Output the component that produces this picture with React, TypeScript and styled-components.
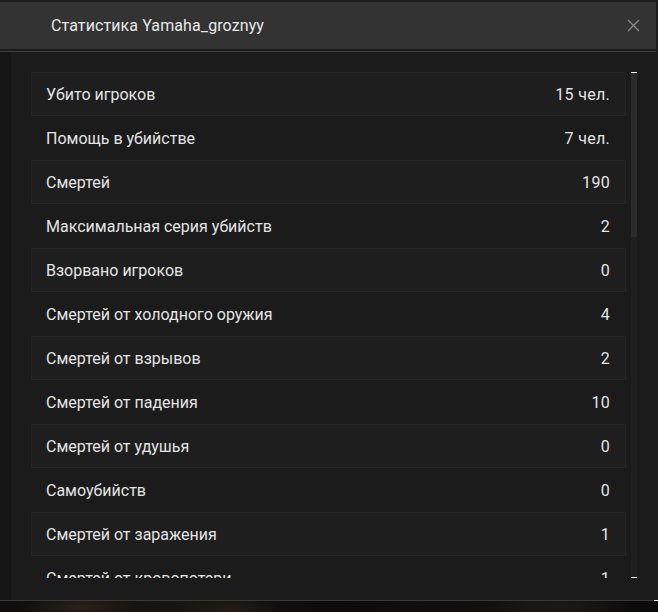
import React from "react";
import styled, { createGlobalStyle } from "styled-components";

const Global = createGlobalStyle`
  html, body { margin: 0; padding: 0; background: #0b0908; }
  body { font-family: Roboto, "Noto Sans", sans-serif; }
  * { box-sizing: border-box; }
`;

const Page = styled.div`
  width: 658px;
  height: 612px;
  display: flex;
  flex-direction: column;
  overflow: hidden;
`;

const Modal = styled.div`
  width: 658px;
  height: 600px;
  flex: none;
  display: flex;
  flex-direction: column;
  background: #1b1b1b;
  border-top: 2px solid #1d1d1d;
  border-right: 2px solid #1d1d1d;
`;

const Header = styled.div`
  height: 49px;
  flex: none;
  display: flex;
  align-items: center;
  justify-content: space-between;
  padding: 0 16px 0 51px;
  background: #333333;
  border-bottom: 2px solid #1c1c1c;
  box-shadow: 0 1px 0 #3d3d3d;
  margin-bottom: 1px;
`;

const Title = styled.div`
  color: #e8e8e8;
  font-size: 16px;
  letter-spacing: 0.1px;
`;

const Close = styled.button`
  width: 14px;
  height: 14px;
  padding: 0;
  border: 0;
  background: none;
  display: flex;
  align-items: center;
  justify-content: center;
  cursor: pointer;
`;

const Body = styled.div`
  flex: 1;
  display: flex;
  min-height: 0;
`;

const SideStrip = styled.div`
  width: 11px;
  flex: none;
  background: #161616;
`;

const Content = styled.div`
  flex: 1;
  display: flex;
  gap: 5px;
  padding: 20px 0 0 20px;
`;

const List = styled.div`
  width: 595px;
  height: 506px;
  overflow: hidden;
  display: flex;
  flex-direction: column;
`;

const Row = styled.div<{ $boxed: boolean }>`
  height: 44px;
  flex: none;
  display: flex;
  align-items: center;
  justify-content: space-between;
  padding: 0 15px 0 14px;
  color: #e4e4e4;
  font-size: 16px;
  background: ${(p) => (p.$boxed ? "#1e1e1e" : "transparent")};
  border: 1px solid ${(p) => (p.$boxed ? "#252525" : "transparent")};
`;

const Value = styled.span`
  letter-spacing: 0.3px;
`;

const Scrollbar = styled.div`
  width: 6px;
  height: 506px;
  display: flex;
  flex-direction: column;
  background: #1f1f1f;
  border-top: 1px solid #f0f0f0;
  border-bottom: 1px solid #f0f0f0;
`;

const Thumb = styled.div`
  height: 164px;
  background: #2b2b2b;
`;

const BottomLine = styled.div`
  height: 1px;
  flex: none;
  display: flex;
  justify-content: flex-end;
  background: #3a3a3a;
`;

const EndMark = styled.div`
  width: 4px;
  height: 1px;
  background: #f0f0f0;
`;

const Backdrop = styled.div`
  flex: 1;
  background:
    radial-gradient(ellipse 60px 12px at 80px 6px, #2a2219 0%, transparent 100%),
    radial-gradient(ellipse 50px 10px at 230px 8px, #241d16 0%, transparent 100%),
    radial-gradient(ellipse 70px 12px at 560px 6px, #1f1a15 0%, transparent 100%),
    linear-gradient(90deg, #100d0a 0%, #1a1510 30%, #0e0b09 50%, #15110d 80%, #0c0a08 100%);
`;

const stats: [string, string][] = [
  ["Убито игроков", "15 чел."],
  ["Помощь в убийстве", "7 чел."],
  ["Смертей", "190"],
  ["Максимальная серия убийств", "2"],
  ["Взорвано игроков", "0"],
  ["Смертей от холодного оружия", "4"],
  ["Смертей от взрывов", "2"],
  ["Смертей от падения", "10"],
  ["Смертей от удушья", "0"],
  ["Самоубийств", "0"],
  ["Смертей от заражения", "1"],
  ["Смертей от кровопотери", "1"],
];

export default function App() {
  return (
    <Page>
      <Global />
      <Modal>
        <Header>
          <Title>Статистика Yamaha_groznyy</Title>
          <Close aria-label="Закрыть">
            <svg width="13" height="13" viewBox="0 0 13 13">
              <path d="M1 1 L12 12 M12 1 L1 12" stroke="#8a8a8a" strokeWidth="1.3" fill="none" />
            </svg>
          </Close>
        </Header>
        <Body>
          <SideStrip />
          <Content>
            <List>
              {stats.map(([label, value], i) => (
                <Row key={label} $boxed={i % 2 === 0}>
                  <span>{label}</span>
                  <Value>{value}</Value>
                </Row>
              ))}
            </List>
            <Scrollbar>
              <Thumb />
            </Scrollbar>
          </Content>
        </Body>
      </Modal>
      <BottomLine>
        <EndMark />
      </BottomLine>
      <Backdrop />
    </Page>
  );
}
